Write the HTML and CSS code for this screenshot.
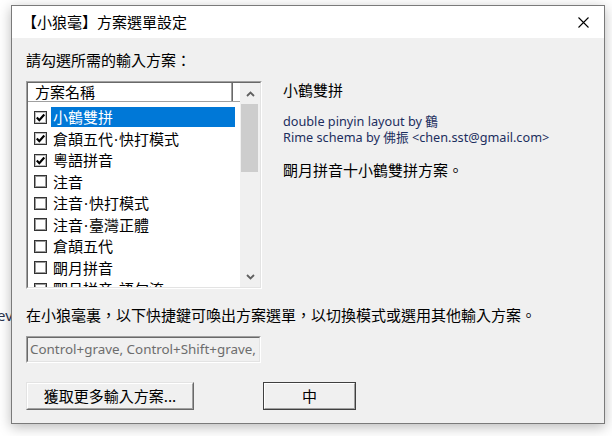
FILE: index.html
```html
<!DOCTYPE html>
<html lang="zh-Hant">
<head>
<meta charset="utf-8">
<title>方案選單設定</title>
<link rel="stylesheet" href="styles.css">
</head>
<body>
<div class="behind">ev</div>
<div class="window">
  <div class="titlebar">
    <div class="title">【小狼毫】方案選單設定</div>
    <div class="close"><svg width="11" height="11" viewBox="0 0 11 11"><path d="M0.5 0.5 L10.5 10.5 M10.5 0.5 L0.5 10.5" stroke="#000" stroke-width="1.1" fill="none"/></svg></div>
  </div>
  <div class="client">
    <div class="prompt">請勾選所需的輸入方案：</div>
    <div class="main">
      <div class="list">
        <div class="list-inner">
          <div class="list-main">
            <div class="header"><div class="header-cell">方案名稱</div></div>
            <div class="rows">
              <div class="row"><span class="cb on"><svg width="11" height="11" viewBox="0 0 11 11"><path d="M1.8 5.6 L4.3 8.2 L9.3 2.6" stroke="#000" stroke-width="2.2" fill="none"/></svg></span><span class="label selected">小鶴雙拼</span></div>
              <div class="row"><span class="cb on"><svg width="11" height="11" viewBox="0 0 11 11"><path d="M1.8 5.6 L4.3 8.2 L9.3 2.6" stroke="#000" stroke-width="2.2" fill="none"/></svg></span><span class="label">倉頡五代<span class="dot">·</span>快打模式</span></div>
              <div class="row"><span class="cb on"><svg width="11" height="11" viewBox="0 0 11 11"><path d="M1.8 5.6 L4.3 8.2 L9.3 2.6" stroke="#000" stroke-width="2.2" fill="none"/></svg></span><span class="label">粵語拼音</span></div>
              <div class="row"><span class="cb"></span><span class="label">注音</span></div>
              <div class="row"><span class="cb"></span><span class="label">注音<span class="dot">·</span>快打模式</span></div>
              <div class="row"><span class="cb"></span><span class="label">注音<span class="dot">·</span>臺灣正體</span></div>
              <div class="row"><span class="cb"></span><span class="label">倉頡五代</span></div>
              <div class="row"><span class="cb"></span><span class="label">朙月拼音</span></div>
              <div class="row"><span class="cb"></span><span class="label">朙月拼音<span class="dot">·</span>語句流</span></div>
            </div>
          </div>
          <div class="scrollbar">
            <div class="sb-btn"><svg width="9" height="6" viewBox="0 0 9 6"><path d="M1 5 L4.5 1.5 L8 5" stroke="#606060" stroke-width="1.8" fill="none"/></svg></div>
            <div class="sb-track"><div class="sb-thumb"></div></div>
            <div class="sb-btn"><svg width="9" height="6" viewBox="0 0 9 6"><path d="M1 1 L4.5 4.5 L8 1" stroke="#606060" stroke-width="1.8" fill="none"/></svg></div>
          </div>
        </div>
      </div>
      <div class="info">
        <div class="info-name">小鶴雙拼</div>
        <div class="info-authors">
          <div class="author-line">double pinyin layout by 鶴</div>
          <div class="author-line">Rime schema by 佛振 &lt;chen.sst@gmail.com&gt;</div>
        </div>
        <div class="info-desc">朙月拼音十小鶴雙拼方案。</div>
      </div>
    </div>
    <div class="hint">在小狼毫裏，以下快捷鍵可喚出方案選單，以切換模式或選用其他輸入方案。</div>
    <div class="hotkeys"><div class="hotkeys-inner">Control+grave, Control+Shift+grave,</div></div>
    <div class="buttons">
      <div class="btn btn-more"><div class="btn-face">獲取更多輸入方案...</div></div>
      <div class="btn btn-default"><div class="btn-face">中</div></div>
    </div>
  </div>
</div>
</body>
</html>
```

FILE: styles.css
```css
* { box-sizing: border-box; margin: 0; padding: 0; }
html, body { width: 612px; height: 436px; overflow: hidden; }
body {
  background: #ffffff;
  font-family: "Noto Sans CJK TC", "Noto Sans", sans-serif;
  font-size: 15px;
  color: #000;
  position: relative;
}
.behind {
  position: absolute;
  left: -3px;
  top: 305px;
  font-family: "Noto Sans", sans-serif;
  font-size: 15px;
  line-height: 20px;
  color: #2a3550;
}
.window {
  position: absolute;
  left: 11px;
  top: 5px;
  width: 594px;
  height: 419px;
  border: 1px solid #7a7a7a;
  background: #f0f0f0;
  box-shadow: 0 3px 12px rgba(0, 0, 0, 0.28);
  display: flex;
  flex-direction: column;
}
.titlebar {
  height: 32px;
  flex: none;
  background: #fff;
  display: flex;
  align-items: center;
  padding-left: 10px;
}
.title { flex: 1; line-height: 20px; }
.close {
  width: 42px;
  height: 32px;
  display: flex;
  align-items: center;
  justify-content: center;
}
.client {
  flex: 1;
  padding: 12px 14px 12px 14px;
  display: flex;
  flex-direction: column;
}
.prompt { height: 20px; line-height: 20px; }
.main { margin-top: 11px; display: flex; height: 208px; }
.list {
  width: 236px;
  height: 208px;
  border: 1px solid;
  border-color: #a0a0a0 #ffffff #ffffff #a0a0a0;
  flex: none;
}
.list-inner {
  height: 100%;
  border: 1px solid;
  border-color: #696969 #e3e3e3 #e3e3e3 #696969;
  background: #fff;
  display: flex;
}
.list-main { flex: 1; display: flex; flex-direction: column; overflow: hidden; }
.header {
  height: 19px;
  flex: none;
  border-bottom: 1px solid #a0a0a0;
  display: flex;
}
.header-cell {
  width: 205px;
  padding-left: 7px;
  line-height: 18px;
  border-right: 1px solid #696969;
  box-shadow: inset -1px 0 0 #a0a0a0;
}
.rows { padding-top: 4.25px; }
.row {
  height: 21.5px;
  display: flex;
  align-items: center;
  padding-left: 6px;
}
.cb {
  width: 13px;
  height: 13px;
  flex: none;
  border: 1px solid #333;
  box-shadow: inset 0 0 0 1px #9a9a9a;
  background: #fff;
  display: flex;
  align-items: center;
  justify-content: center;
}
.cb.on { box-shadow: inset 0 0 0 1px #bdbdbd; border-color: #333; }
.label {
  margin-left: 4px;
  margin-right: 5px;
  flex: 1;
  height: 20px;
  line-height: 20px;
  padding-left: 2px;
  white-space: nowrap;
}
.dot { font-family: "Noto Sans", sans-serif; padding: 0 1px; }
.label.selected { background: #0078d7; color: #fff; }
.scrollbar {
  width: 20px;
  flex: none;
  background: #f0f0f0;
  display: flex;
  flex-direction: column;
}
.sb-btn {
  height: 21px;
  flex: none;
  display: flex;
  align-items: center;
  justify-content: center;
}
.sb-track { flex: 1; padding: 0 2px 0 1px; }
.sb-thumb { height: 68px; background: #cdcdcd; }
.info { margin-left: 21px; }
.info-name { line-height: 18px; }
.info-authors {
  margin-top: 14px;
  font-family: "Noto Sans", "Noto Sans CJK TC", sans-serif;
  font-size: 12.7px;
  color: #1c2e5e;
}
.author-line { height: 16px; line-height: 16px; }
.info-desc { margin-top: 15px; line-height: 20px; }
.hint { margin-top: 16px; line-height: 20px; white-space: nowrap; }
.hotkeys {
  margin-top: 11px;
  width: 235px;
  height: 27px;
  border: 1px solid;
  border-color: #a0a0a0 #ffffff #ffffff #a0a0a0;
}
.hotkeys-inner {
  height: 100%;
  border: 1px solid;
  border-color: #696969 #e3e3e3 #e3e3e3 #696969;
  padding-left: 2px;
  font-family: "Noto Sans", sans-serif;
  font-size: 13.4px;
  line-height: 23px;
  color: #6d6d6d;
  white-space: nowrap;
  overflow: hidden;
}
.buttons { margin-top: 19px; display: flex; }
.btn {
  height: 28px;
  border: 1px solid;
  border-color: #e3e3e3 #696969 #696969 #e3e3e3;
}
.btn-face {
  height: 100%;
  border: 1px solid;
  border-color: #ffffff #a0a0a0 #a0a0a0 #ffffff;
  background: #f0f0f0;
  display: flex;
  align-items: center;
  justify-content: center;
  line-height: 20px;
}
.btn-more { width: 168px; }
.btn-default {
  width: 93px;
  margin-left: 69px;
  border-color: #404040;
}
```
